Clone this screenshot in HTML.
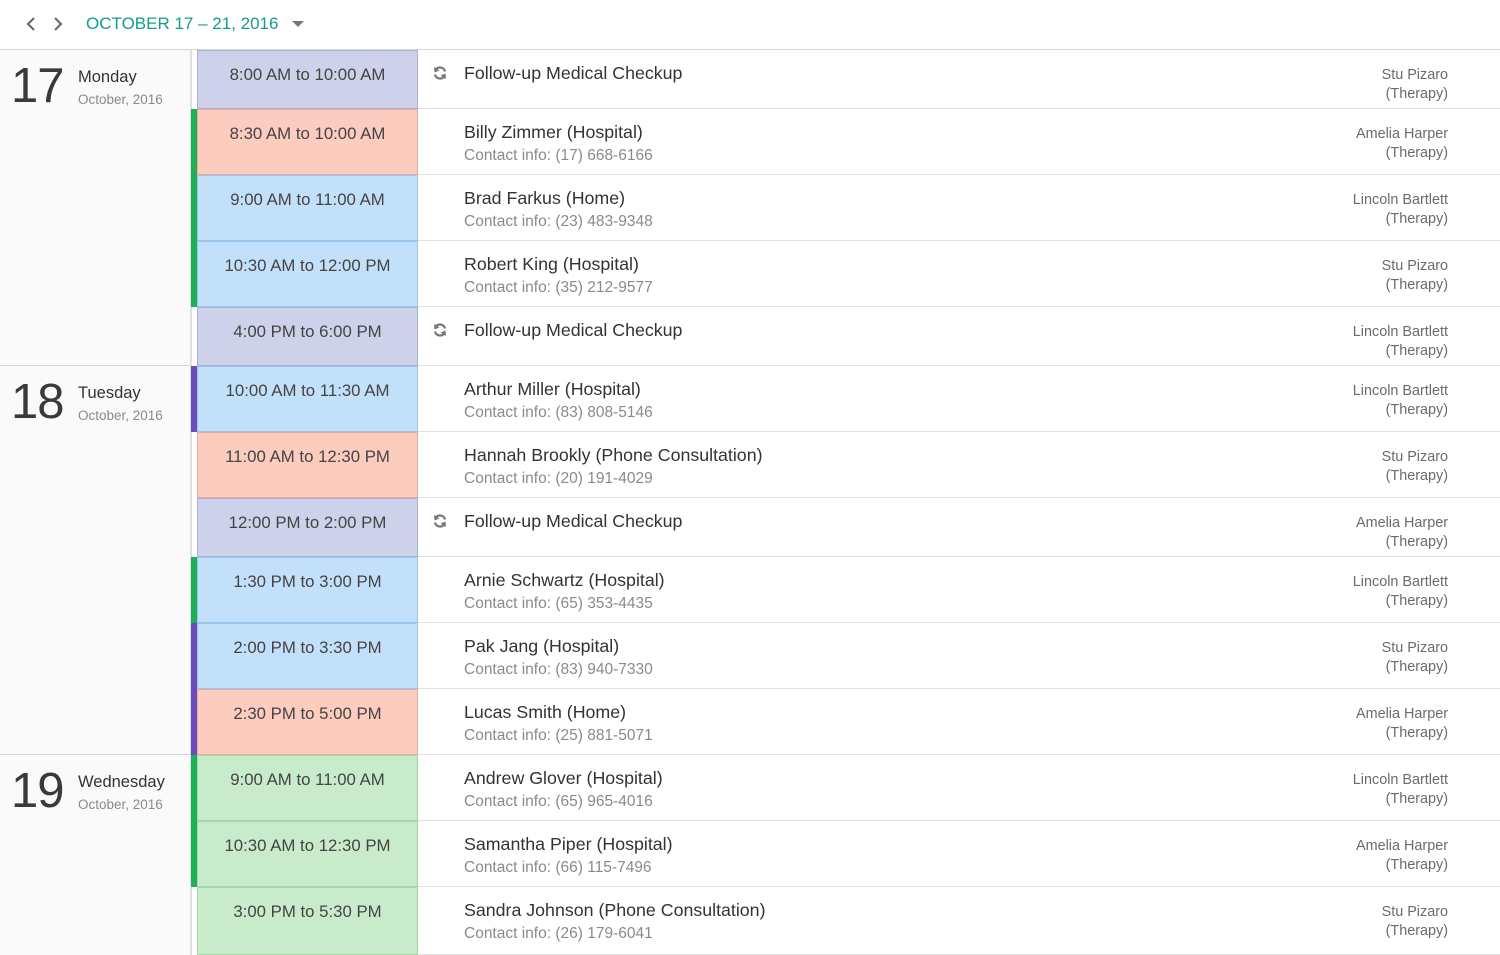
<!DOCTYPE html>
<html><head><meta charset="utf-8"><style>
*{margin:0;padding:0;box-sizing:border-box}
body{width:1500px;height:952px;overflow:hidden;background:#fff;font-family:"Liberation Sans",sans-serif;color:#424242;position:relative}
.hdr{position:absolute;left:0;top:0;width:1500px;height:50px;border-bottom:1px solid #d6d6d6}
.hdr .title{position:absolute;left:86px;top:14px;font-size:17px;color:#139c8f}
.day{position:absolute;left:0;width:191px;background:#fafafa;border-right:1px solid #e0e0e0;border-bottom:1px solid #d6d6d6}
.day .n{position:absolute;left:11px;top:8px;font-size:49px;color:#3a3a3a;font-weight:300;letter-spacing:-1px}
.day .w{position:absolute;left:78px;top:18px;font-size:16.5px;color:#333}
.day .mo{position:absolute;left:78px;top:42px;font-size:13.5px;color:#8a8a8a}
.r{position:absolute;left:191px;right:0}
.s{position:absolute;left:0;top:0;bottom:0;width:6px}
.t{position:absolute;left:6px;width:221px;top:0;bottom:0;text-align:center;font-size:16.8px;padding-top:14px;color:#444}
.m{position:absolute;left:227px;right:0;top:0;bottom:0;border-bottom:1px solid #e0e0e0}
.m .a{position:absolute;left:46px;top:13px;font-size:17.8px;color:#333}
.m .b{position:absolute;left:46px;top:38px;font-size:15.5px;color:#8a8a8a}
.m .ic{position:absolute;left:14px;top:15px}
.m .p{position:absolute;right:52px;top:16px;text-align:right;font-size:14.4px;line-height:19px;color:#6b6b6b}
.lav{background:#cdd1ea;border:1px solid #a9b0d6}
.sal{background:#fcccbf;border:1px solid #eba999}
.blu{background:#c3e0fb;border:1px solid #9cc5ec}
.grn{background:#c8eccb;border:1px solid #a6d6aa}
.G{background:#1db056}.P{background:#6a4cbc}.W{background:#fff;border-left:1px solid #e0e0e0}
</style></head><body>
<div class="hdr">
<svg style="position:absolute;left:24px;top:16px" width="14" height="16" viewBox="0 0 14 16"><path d="M10 2 L4 8 L10 14" stroke="#666" stroke-width="2" fill="none"/></svg>
<svg style="position:absolute;left:51px;top:16px" width="14" height="16" viewBox="0 0 14 16"><path d="M4 2 L10 8 L4 14" stroke="#666" stroke-width="2" fill="none"/></svg>
<div class="title">OCTOBER 17 – 21, 2016</div>
<svg style="position:absolute;left:292px;top:21px" width="12" height="7"><path d="M0 0 L12 0 L6 6Z" fill="#777"/></svg>
</div>

<div class="day" style="top:50px;height:316px"><div class="n">17</div><div class="w">Monday</div><div class="mo">October, 2016</div></div>
<div class="day" style="top:366px;height:389px"><div class="n">18</div><div class="w">Tuesday</div><div class="mo">October, 2016</div></div>
<div class="day" style="top:755px;height:200px;border-bottom:none"><div class="n">19</div><div class="w">Wednesday</div><div class="mo">October, 2016</div></div>

<svg width="0" height="0" style="position:absolute"><defs><symbol id="rf" viewBox="0 0 16 16"><path d="M13 6.5A5.2 5.2 0 0 0 3.5 5M3 9.5A5.2 5.2 0 0 0 12.5 11" stroke="#777" stroke-width="2.2" fill="none"/><path d="M2 2 L2.5 7.5 L7.5 5.5Z M14 14 L13.5 8.5 L8.5 10.5Z" fill="#777"/></symbol></defs></svg>

<div class="r" style="top:50px;height:59px"><div class="s W"></div><div class="t lav">8:00 AM to 10:00 AM</div><div class="m"><svg class="ic" width="16" height="16"><use href="#rf"/></svg><div class="a">Follow-up Medical Checkup</div><div class="p">Stu Pizaro<br>(Therapy)</div></div></div>
<div class="r" style="top:109px;height:66px"><div class="s G"></div><div class="t sal">8:30 AM to 10:00 AM</div><div class="m"><div class="a">Billy Zimmer (Hospital)</div><div class="b">Contact info: (17) 668-6166</div><div class="p">Amelia Harper<br>(Therapy)</div></div></div>
<div class="r" style="top:175px;height:66px"><div class="s G"></div><div class="t blu">9:00 AM to 11:00 AM</div><div class="m"><div class="a">Brad Farkus (Home)</div><div class="b">Contact info: (23) 483-9348</div><div class="p">Lincoln Bartlett<br>(Therapy)</div></div></div>
<div class="r" style="top:241px;height:66px"><div class="s G"></div><div class="t blu">10:30 AM to 12:00 PM</div><div class="m"><div class="a">Robert King (Hospital)</div><div class="b">Contact info: (35) 212-9577</div><div class="p">Stu Pizaro<br>(Therapy)</div></div></div>
<div class="r" style="top:307px;height:59px"><div class="s W"></div><div class="t lav">4:00 PM to 6:00 PM</div><div class="m"><svg class="ic" width="16" height="16"><use href="#rf"/></svg><div class="a">Follow-up Medical Checkup</div><div class="p">Lincoln Bartlett<br>(Therapy)</div></div></div>
<div class="r" style="top:366px;height:66px"><div class="s P"></div><div class="t blu">10:00 AM to 11:30 AM</div><div class="m"><div class="a">Arthur Miller (Hospital)</div><div class="b">Contact info: (83) 808-5146</div><div class="p">Lincoln Bartlett<br>(Therapy)</div></div></div>
<div class="r" style="top:432px;height:66px"><div class="s W"></div><div class="t sal">11:00 AM to 12:30 PM</div><div class="m"><div class="a">Hannah Brookly (Phone Consultation)</div><div class="b">Contact info: (20) 191-4029</div><div class="p">Stu Pizaro<br>(Therapy)</div></div></div>
<div class="r" style="top:498px;height:59px"><div class="s W"></div><div class="t lav">12:00 PM to 2:00 PM</div><div class="m"><svg class="ic" width="16" height="16"><use href="#rf"/></svg><div class="a">Follow-up Medical Checkup</div><div class="p">Amelia Harper<br>(Therapy)</div></div></div>
<div class="r" style="top:557px;height:66px"><div class="s G"></div><div class="t blu">1:30 PM to 3:00 PM</div><div class="m"><div class="a">Arnie Schwartz (Hospital)</div><div class="b">Contact info: (65) 353-4435</div><div class="p">Lincoln Bartlett<br>(Therapy)</div></div></div>
<div class="r" style="top:623px;height:66px"><div class="s P"></div><div class="t blu">2:00 PM to 3:30 PM</div><div class="m"><div class="a">Pak Jang (Hospital)</div><div class="b">Contact info: (83) 940-7330</div><div class="p">Stu Pizaro<br>(Therapy)</div></div></div>
<div class="r" style="top:689px;height:66px"><div class="s P"></div><div class="t sal">2:30 PM to 5:00 PM</div><div class="m"><div class="a">Lucas Smith (Home)</div><div class="b">Contact info: (25) 881-5071</div><div class="p">Amelia Harper<br>(Therapy)</div></div></div>
<div class="r" style="top:755px;height:66px"><div class="s G"></div><div class="t grn">9:00 AM to 11:00 AM</div><div class="m"><div class="a">Andrew Glover (Hospital)</div><div class="b">Contact info: (65) 965-4016</div><div class="p">Lincoln Bartlett<br>(Therapy)</div></div></div>
<div class="r" style="top:821px;height:66px"><div class="s G"></div><div class="t grn">10:30 AM to 12:30 PM</div><div class="m"><div class="a">Samantha Piper (Hospital)</div><div class="b">Contact info: (66) 115-7496</div><div class="p">Amelia Harper<br>(Therapy)</div></div></div>
<div class="r" style="top:887px;height:68px"><div class="s W"></div><div class="t grn">3:00 PM to 5:30 PM</div><div class="m"><div class="a">Sandra Johnson (Phone Consultation)</div><div class="b">Contact info: (26) 179-6041</div><div class="p">Stu Pizaro<br>(Therapy)</div></div></div>
</body></html>
